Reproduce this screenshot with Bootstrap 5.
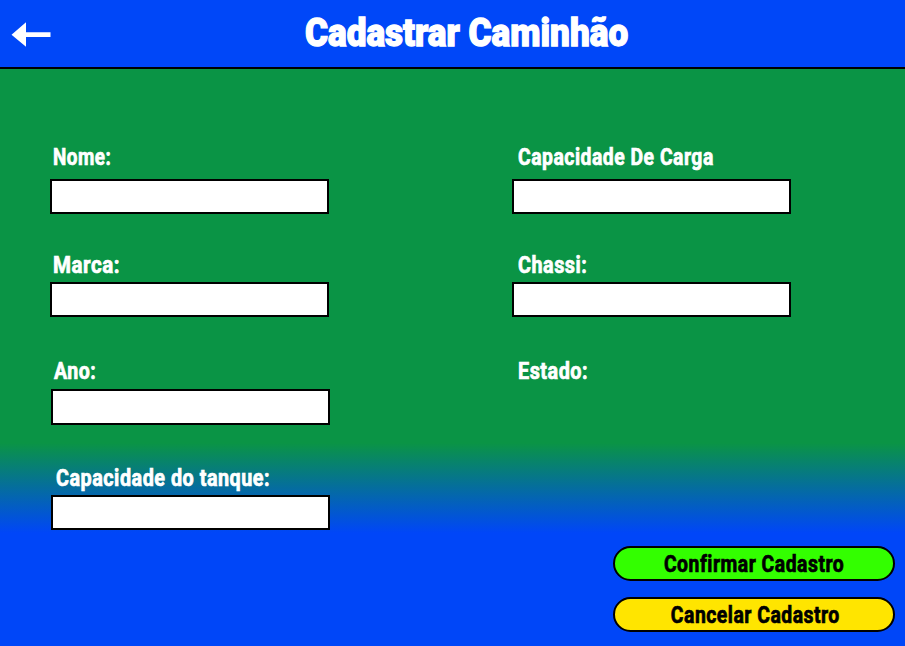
<!DOCTYPE html>
<html lang="pt-BR">
<head>
<meta charset="utf-8">
<meta name="viewport" content="width=device-width, initial-scale=1">
<title>Cadastrar Caminhão</title>
<link href="https://cdn.jsdelivr.net/npm/bootstrap@5.3.0/dist/css/bootstrap.min.css" rel="stylesheet">
<style>
  body { width: 905px; height: 646px; overflow: hidden; font-family: Roboto, "Liberation Sans", sans-serif; }
  .top-bar { height: 69px; background: #0047f8; border-bottom: 2px solid #000; padding-right: 36px; }
  .back-link { width: 64px; }

  /* condensed lettering: each text has its own horizontal scale */
  .narrow { display: inline-block; white-space: nowrap; letter-spacing: .6px; transform: scaleX(var(--sx, .842)); transform-origin: var(--from, left) center; }
  .page-title { font-size: 39px; font-weight: 900; line-height: 46px; letter-spacing: 0; color: #fff; -webkit-text-stroke: 1.3px #fff; padding-bottom: 2px; --from: center; --sx: .9; }

  .form-area { background: linear-gradient(#0a9445 374px, #0046f8 464px); padding: 77px 10px 14px 50px; }
  .left-side { width: 462px; }
  .field { height: 107px; }
  .field-first { height: 108px; }
  .field-second { height: 106px; }
  .field-tag { height: 24px; line-height: 24px; font-size: 23px; font-weight: 700; color: #fff; -webkit-text-stroke: .7px currentColor; padding-left: 3px; margin-bottom: 4px; }
  .field-first .field-tag { margin-bottom: 8.6px; }
  .right-side .field-tag { padding-left: 6px; }
  .field-third .field-tag { padding-left: 4px; margin-bottom: 5.4px; }
  .field-fourth .field-tag { padding-left: 6px; }
  .entry { width: 278.5px; height: 35.3px; border: 2px solid #000; background: #fff; }
  .field-third .entry, .field-fourth .entry { margin-left: 1px; }

  .pill { width: 282px; height: 35px; border: 2px solid #000; color: #000; font-size: 23px; font-weight: 700; line-height: 33px; -webkit-text-stroke: .7px #000; --from: center; }
  .pill-confirm, .pill-confirm:hover { background: #3f0; border-color: #000; }
  .pill-cancel, .pill-cancel:hover { background: #ffe500; border-color: #000; padding-left: 2px !important; }

  .sx-nome { --sx: .82; }
  .sx-marca { --sx: .895; }
  .sx-ano { --sx: .85; }
  .sx-wide { --sx: .86; }
</style>
</head>
<body class="d-flex flex-column m-0">
<header class="top-bar d-flex align-items-center flex-shrink-0">
  <a href="#" class="back-link" aria-label="Voltar">
    <svg width="64" height="67" viewBox="0 0 64 67" class="d-block"><path d="M11.5 34.7 26 22.3v9.9h24.5v4.9H26v9.6z" fill="#fff"/></svg>
  </a>
  <h1 class="page-title narrow mx-auto mb-0">Cadastrar Caminhão</h1>
</header>
<main class="form-area d-flex flex-grow-1">
  <div class="left-side flex-shrink-0">
    <div class="field field-first"><label class="field-tag d-block" for="nome"><span class="narrow sx-nome">Nome:</span></label><input id="nome" class="entry d-block"></div>
    <div class="field field-second"><label class="field-tag d-block" for="marca"><span class="narrow sx-marca">Marca:</span></label><input id="marca" class="entry d-block"></div>
    <div class="field field-third"><label class="field-tag d-block" for="ano"><span class="narrow sx-ano">Ano:</span></label><input id="ano" class="entry d-block"></div>
    <div class="field field-fourth"><label class="field-tag d-block" for="tanque"><span class="narrow sx-wide">Capacidade do tanque:</span></label><input id="tanque" class="entry d-block"></div>
  </div>
  <div class="right-side d-flex flex-column flex-grow-1">
    <div class="field field-first"><label class="field-tag d-block" for="carga"><span class="narrow">Capacidade De Carga</span></label><input id="carga" class="entry d-block"></div>
    <div class="field field-second"><label class="field-tag d-block" for="chassi"><span class="narrow sx-wide">Chassi:</span></label><input id="chassi" class="entry d-block"></div>
    <div class="field-tag"><span class="narrow sx-wide">Estado:</span></div>
    <div class="d-flex flex-column align-items-end gap-3 mt-auto">
      <button type="button" class="pill pill-confirm btn rounded-pill p-0"><span class="narrow">Confirmar Cadastro</span></button>
      <button type="button" class="pill pill-cancel btn rounded-pill p-0"><span class="narrow">Cancelar Cadastro</span></button>
    </div>
  </div>
</main>
<script src="https://cdn.jsdelivr.net/npm/bootstrap@5.3.0/dist/js/bootstrap.bundle.min.js"></script>
</body>
</html>
